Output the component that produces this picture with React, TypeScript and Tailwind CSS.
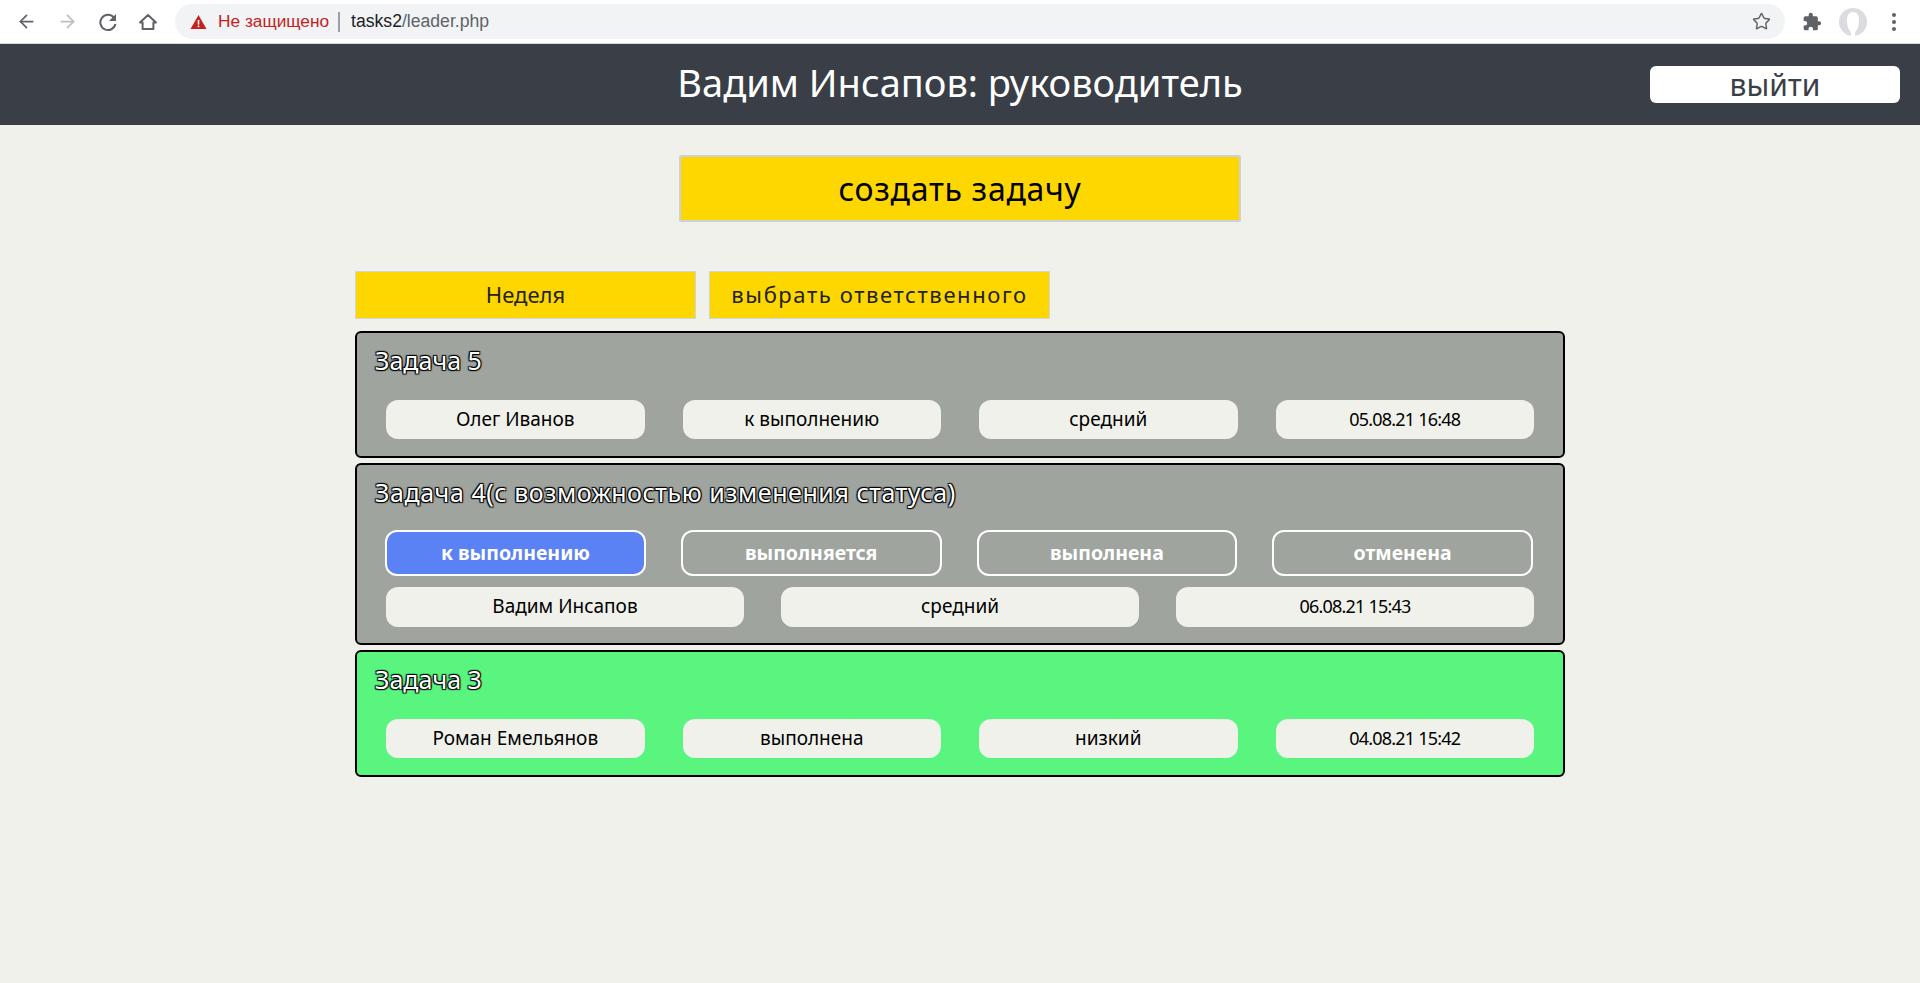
import { ArrowLeft, ArrowRight, Star } from "lucide-react";

const FONT = "font-['Noto_Sans',sans-serif]";

const pill = "h-[39px] flex items-center justify-center rounded-[12px] bg-[#f0f1eb] text-[19px] text-black pb-[1px]";
const datePill = "h-[39px] flex items-center justify-center rounded-[12px] bg-[#f0f1eb] text-[18px] tracking-[-0.8px] text-black pb-[1px]";
const titleText =
  "h-8 ml-[18px] text-[25px] leading-[30px] text-white [text-shadow:1px_1px_1px_#000,-1px_-1px_1px_#000,1px_-1px_1px_#000,-1px_1px_1px_#000]";
const statusBtn = "h-[46px] rounded-[12px] border-2 border-white text-[19.5px] font-bold text-white";

function BrowserBar() {
  return (
    <div className="h-[44px] flex items-center bg-white border-b border-[#d6d8da] font-['Liberation_Sans',sans-serif]">
      <div className="w-[175px] flex items-center pl-[16px] gap-[20px] text-[#5f6368]">
        <ArrowLeft size={21} strokeWidth={2} />
        <ArrowRight size={21} strokeWidth={2} className="text-[#bcbec1]" />
        <svg width="20" height="20" viewBox="0 0 20 20" fill="none">
          <path d="M15.800 5.600A7.600 7.600 0 1 0 17.400 12" stroke="#5f6368" strokeWidth="2" />
          <path d="M18 2v7h-7z" fill="#5f6368" />
        </svg>
        <svg width="20" height="20" viewBox="0 0 20 20" fill="none">
          <path d="M10 3 18 10.500h-2.600V17H4.600V10.500H2Z" stroke="#5f6368" strokeWidth="2" strokeLinejoin="round" />
        </svg>
      </div>
      <div className="w-[1610px] h-[35px] flex items-center rounded-full bg-[#f1f3f4] pl-[15px] pr-[14px]">
        <svg width="17" height="16" viewBox="0 0 17 16" className="mr-[11px]">
          <path d="M8.500 1 16.500 15H.5Z" fill="#c5221f" />
          <rect x="7.700" y="6" width="1.600" height="4.600" fill="#fff" />
          <rect x="7.700" y="11.600" width="1.600" height="1.600" fill="#fff" />
        </svg>
        <span className="text-[17.3px] text-[#c5221f]">Не защищено</span>
        <span className="w-[2px] h-[20px] ml-[9px] mr-[11px] bg-[#9aa0a6]" />
        <span className="text-[17.6px] text-[#202124]">tasks2</span>
        <span className="text-[17.6px] text-[#5f6368]">/leader.php</span>
        <Star size={19} strokeWidth={1.8} className="ml-auto text-[#5f6368]" />
      </div>
      <div className="flex-1 flex items-center pl-[17px] gap-[17px]">
        <svg width="20" height="20" viewBox="0 0 24 24" fill="#5f6368">
          <path d="M20.500 11H19V7a2 2 0 0 0-2-2h-4V3.500a2.500 2.500 0 0 0-5 0V5H4a2 2 0 0 0-2 2v3.800h1.500a2.700 2.700 0 0 1 0 5.400H2V20a2 2 0 0 0 2 2h3.800v-1.500a2.700 2.700 0 0 1 5.400 0V22H17a2 2 0 0 0 2-2v-4h1.500a2.500 2.500 0 0 0 0-5z" />
        </svg>
        <svg width="28" height="28" viewBox="0 0 28 28">
          <circle cx="14" cy="14" r="14" fill="#dadce0" />
          <path d="M14 4c-4 0-6 3-6 8 0 5 1 9 3 11 1 1 1 3 1 5h4c0-2 0-4 1-5 2-2 3-6 3-11 0-5-2-8-6-8z" fill="#fff" />
        </svg>
        <div className="ml-[8px] flex flex-col gap-[3px]">
          <span className="w-[4px] h-[4px] rounded-full bg-[#5f6368]" />
          <span className="w-[4px] h-[4px] rounded-full bg-[#5f6368]" />
          <span className="w-[4px] h-[4px] rounded-full bg-[#5f6368]" />
        </div>
      </div>
    </div>
  );
}

function TaskRow({ items, date }: { items: string[]; date: string }) {
  return (
    <div className="grid grid-cols-4 gap-[38px] px-[29px]">
      {items.map((item) => (
        <div key={item} className={pill}>
          {item}
        </div>
      ))}
      <div className={datePill}>{date}</div>
    </div>
  );
}

export default function App() {
  return (
    <div className={`min-h-[983px] bg-[#f0f1eb] ${FONT}`}>
      <BrowserBar />

      <header className="h-[81px] grid grid-cols-[1fr_auto_1fr] items-center bg-[#3a3f47]">
        <div />
        <h1 className="text-[38px] text-white pb-[4px]">Вадим Инсапов: руководитель</h1>
        <div className="flex justify-end pr-[20px]">
          <button className="w-[250px] h-[37px] rounded-[6px] bg-white text-[30px] leading-[34px] text-[#3a3f47]">
            выйти
          </button>
        </div>
      </header>

      <div className="flex justify-center pt-[30px]">
        <button className="w-[562px] h-[67px] border-2 border-[#cdd0d4] rounded-[2px] bg-[#ffd700] text-[32px] tracking-[0.7px] leading-[56px] text-black">
          создать задачу
        </button>
      </div>

      <div className="w-[1210px] mx-auto pt-[49px]">
        <div className="flex gap-[13px] mb-[12px]">
          <button className="w-[341px] h-[48px] border border-[#d0d5dd] bg-[#ffd700] text-[22px] pb-[2px] text-[#222]">
            Неделя
          </button>
          <button className="w-[341px] h-[48px] border border-[#d0d5dd] bg-[#ffd700] text-[22px] tracking-[1.6px] pb-[2px] text-[#222]">
            выбрать ответственного
          </button>
        </div>

        <div className="flex flex-col gap-[5px]">
          <section className="h-[127px] border-2 border-black rounded-[6px] bg-[#a0a49f] pt-[12px]">
            <h2 className={titleText}>Задача 5</h2>
            <div className="mt-[23px]">
              <TaskRow items={["Олег Иванов", "к выполнению", "средний"]} date="05.08.21 16:48" />
            </div>
          </section>

          <section className="h-[182px] border-2 border-black rounded-[6px] bg-[#a0a49f] pt-[12px]">
            <h2 className={`${titleText} tracking-[0.55px]`}>Задача 4(с возможностью изменения статуса)</h2>
            <div className="mt-[21px] grid grid-cols-4 gap-[35px] pl-[28px] pr-[30px]">
              <button className={`${statusBtn} bg-[#5a82f5]`}>к выполнению</button>
              <button className={statusBtn}>выполняется</button>
              <button className={statusBtn}>выполнена</button>
              <button className={statusBtn}>отменена</button>
            </div>
            <div className="mt-[11px] grid grid-cols-3 gap-[37px] px-[29px]">
              <div className={`${pill} h-[40px]`}>Вадим Инсапов</div>
              <div className={`${pill} h-[40px]`}>средний</div>
              <div className={`${datePill} h-[40px]`}>06.08.21 15:43</div>
            </div>
          </section>

          <section className="h-[127px] border-2 border-black rounded-[6px] bg-[#59f57f] pt-[12px]">
            <h2 className={titleText}>Задача 3</h2>
            <div className="mt-[23px]">
              <TaskRow items={["Роман Емельянов", "выполнена", "низкий"]} date="04.08.21 15:42" />
            </div>
          </section>
        </div>
      </div>
    </div>
  );
}
